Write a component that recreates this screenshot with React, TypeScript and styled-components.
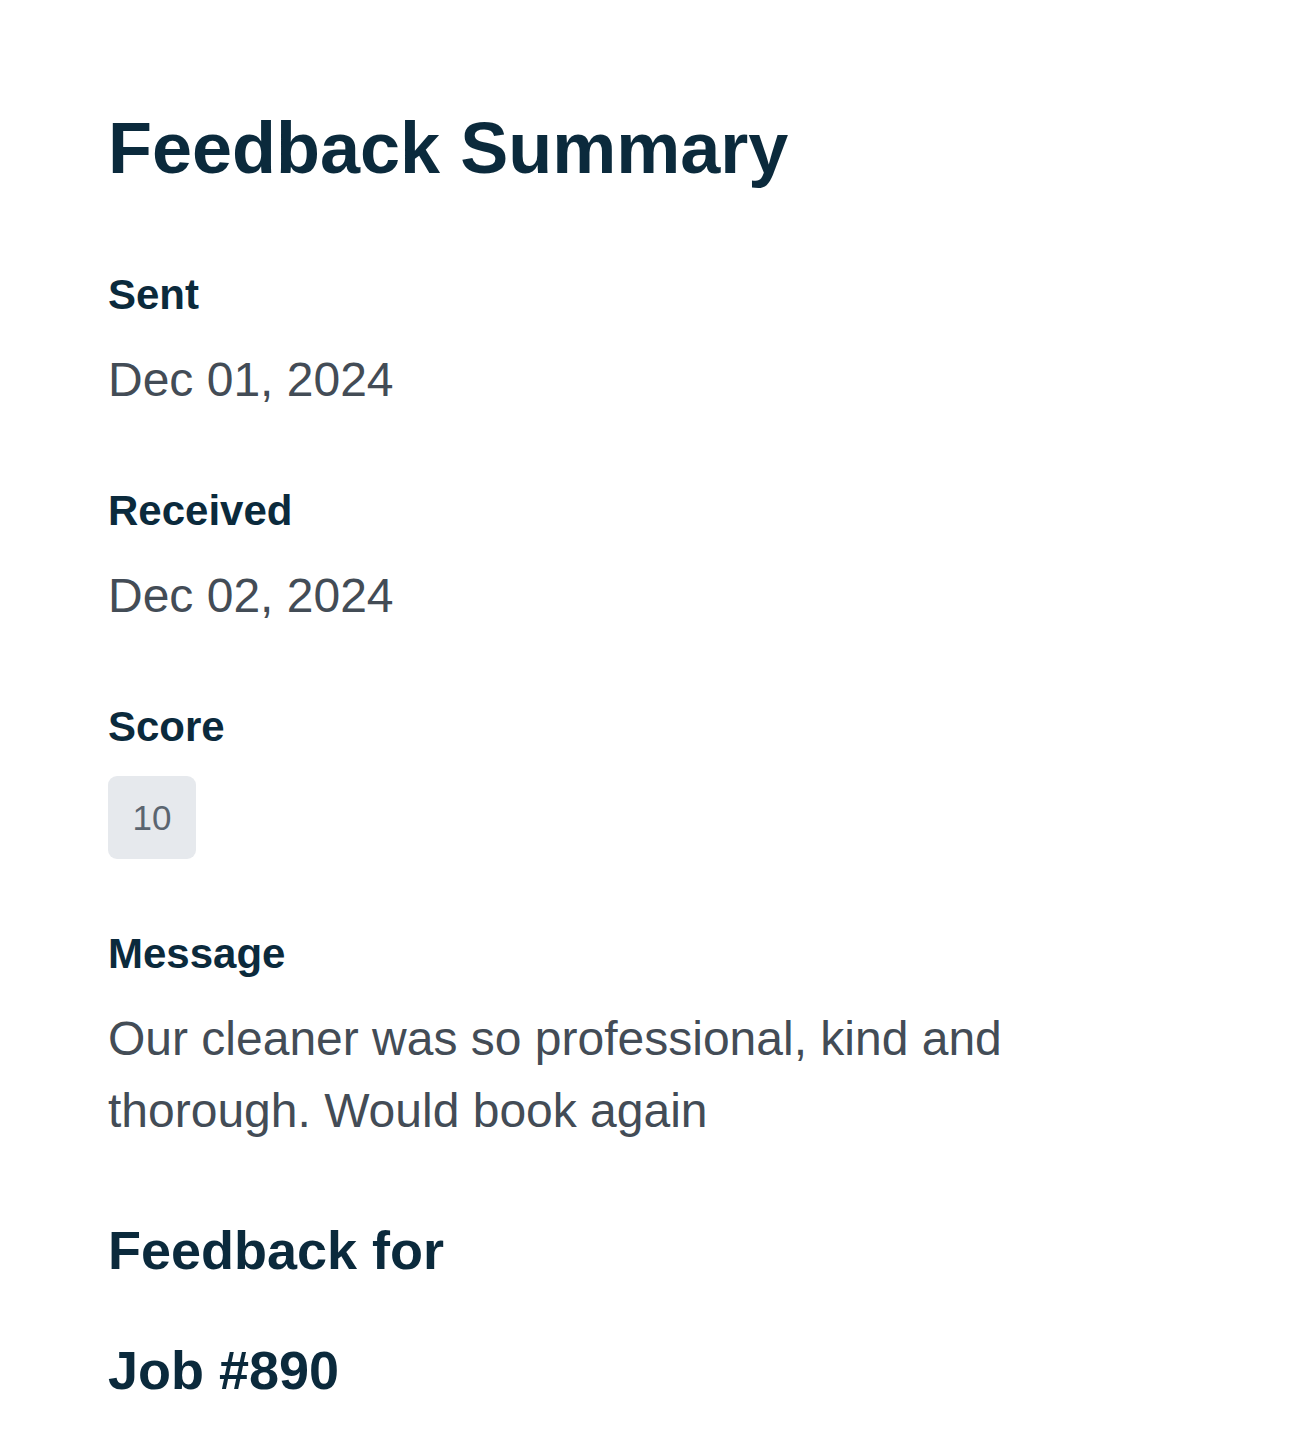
import React from "react";
import styled, { createGlobalStyle } from "styled-components";

const GlobalStyle = createGlobalStyle`
  html, body {
    margin: 0;
    padding: 0;
    background: #ffffff;
  }
  body {
    font-family: "Liberation Sans", Arial, Helvetica, sans-serif;
  }
`;

const Page = styled.main`
  box-sizing: border-box;
  width: 1290px;
  padding: 105px 108px 40px;
  display: flex;
  flex-direction: column;
`;

const Title = styled.h1`
  margin: 0 0 72px;
  font-size: 72px;
  line-height: 1.2;
  font-weight: 700;
  color: #0b2a3c;
`;

const Field = styled.section`
  display: flex;
  flex-direction: column;
  align-items: flex-start;
  gap: 18px;
  margin-bottom: 63px;
`;

const Label = styled.h3`
  margin: 0;
  font-size: 42px;
  line-height: 63px;
  font-weight: 700;
  color: #0b2a3c;
`;

const Value = styled.p`
  margin: 0;
  max-width: 1000px;
  font-size: 48px;
  line-height: 72px;
  font-weight: 400;
  color: #434c56;
`;

const ScoreBadge = styled.span`
  display: inline-flex;
  align-items: center;
  justify-content: center;
  box-sizing: border-box;
  min-width: 88px;
  height: 83px;
  padding: 0 24px;
  border-radius: 9px;
  background: #e6e9ed;
  color: #5b6570;
  font-size: 35px;
`;

const SubHeading = styled.h2`
  margin: 0;
  font-size: 54px;
  line-height: 81px;
  font-weight: 700;
  color: #0b2a3c;
`;

const SubGroup = styled.div`
  display: flex;
  flex-direction: column;
  gap: 39px;
`;

export default function App() {
  return (
    <>
      <GlobalStyle />
      <Page>
        <Title>Feedback Summary</Title>
        <Field>
          <Label>Sent</Label>
          <Value>Dec 01, 2024</Value>
        </Field>
        <Field>
          <Label>Received</Label>
          <Value>Dec 02, 2024</Value>
        </Field>
        <Field>
          <Label>Score</Label>
          <ScoreBadge>10</ScoreBadge>
        </Field>
        <Field>
          <Label>Message</Label>
          <Value>
            Our cleaner was so professional, kind and thorough. Would book again
          </Value>
        </Field>
        <SubGroup>
          <SubHeading>Feedback for</SubHeading>
          <SubHeading>Job #890</SubHeading>
        </SubGroup>
      </Page>
    </>
  );
}
